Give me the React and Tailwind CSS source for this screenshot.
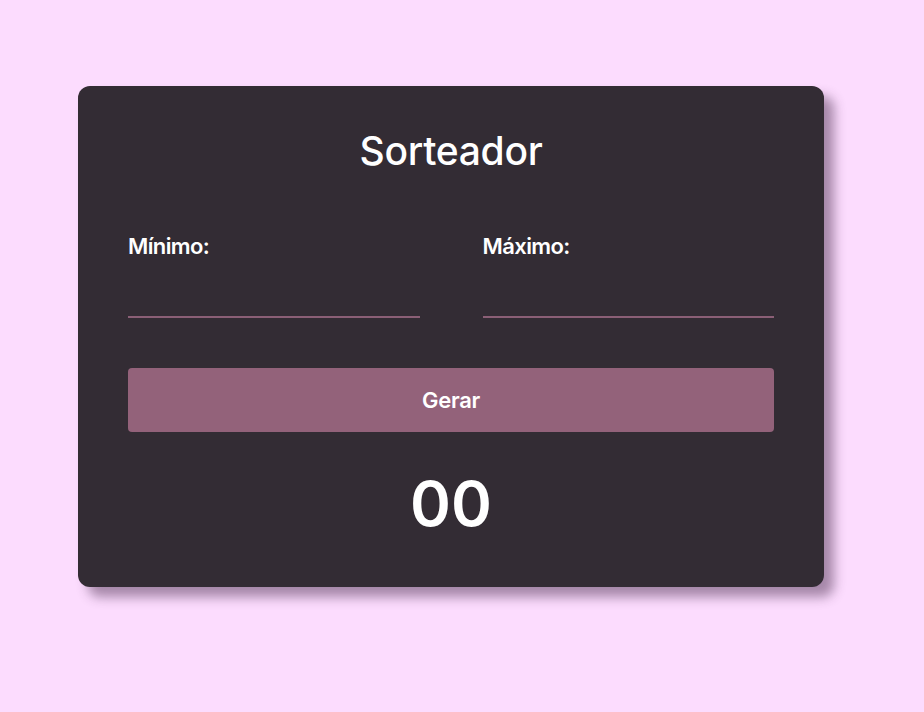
import { useState } from 'react';

const App = () => {
  const [min, setMin] = useState('');
  const [max, setMax] = useState('');
  const [result, setResult] = useState('00');

  const handleGenerate = () => {
    const lo = parseInt(min) || 0;
    const hi = parseInt(max) || 0;
    if (hi < lo) return;
    const n = Math.floor(Math.random() * (hi - lo + 1)) + lo;
    setResult(String(n).padStart(2, '0'));
  };

  return (
    <div
      className="min-h-[712px] bg-[#fcdcfe] pt-[86px] pl-[78px]"
      style={{ fontFamily: 'Inter, "Noto Sans", sans-serif' }}
    >
      <div className="w-[746px] h-[501px] rounded-xl bg-[#332c34] px-[50px] pt-[43px] shadow-[10px_10px_12px_rgba(60,30,65,0.45)]">
        <h1 className="text-center text-white text-[39px] font-medium leading-[44px] tracking-[-0.3px]">
          Sorteador
        </h1>

        <div className="flex gap-[63px] mt-[61px]">
          <div className="flex-1 flex flex-col">
            <label className="text-white text-[22px] font-semibold leading-[24px] tracking-[-0.6px]">
              Mínimo:
            </label>
            <input
              type="number"
              value={min}
              onChange={(e) => setMin(e.target.value)}
              className="mt-[30px] h-[30px] bg-transparent border-b-2 border-[#8b5f76] text-white text-lg outline-none"
            />
          </div>
          <div className="flex-1 flex flex-col">
            <label className="text-white text-[22px] font-semibold leading-[24px] tracking-[-0.6px]">
              Máximo:
            </label>
            <input
              type="number"
              value={max}
              onChange={(e) => setMax(e.target.value)}
              className="mt-[30px] h-[30px] bg-transparent border-b-2 border-[#8b5f76] text-white text-lg outline-none"
            />
          </div>
        </div>

        <button
          onClick={handleGenerate}
          className="mt-[50px] w-full h-[64px] rounded bg-[#93627a] text-white text-[22px] font-semibold tracking-[-0.3px]"
        >
          Gerar
        </button>

        <p className="mt-[36px] text-center text-white text-[62px] font-semibold leading-[72px]">
          {result}
        </p>
      </div>
    </div>
  );
};

export default App;
